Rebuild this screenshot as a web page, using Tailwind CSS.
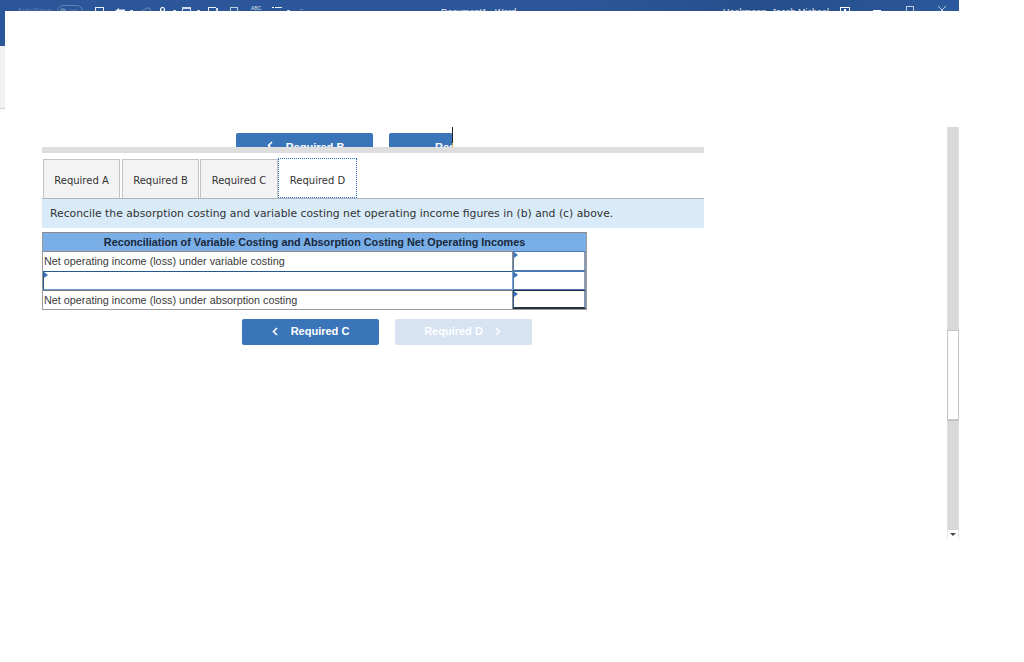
<!DOCTYPE html>
<html>
<head>
<meta charset="utf-8">
<script src="https://cdn.jsdelivr.net/npm/@tailwindcss/browser@4"></script>
<title>Reconciliation</title>
</head>
<body class="bg-white">
<div class="w-[1024px] h-[662px] overflow-hidden bg-white font-['Liberation_Sans',Arial,sans-serif]">
  <div class="w-[959px] h-[11px] overflow-hidden flex items-start bg-gradient-to-r from-[#2b579a] from-60% via-[#254e8b] via-80% to-[#2c599d] text-white">
    <span class="ml-[17px] w-[34px] mt-[6px] text-[8px] leading-[10px] whitespace-nowrap text-white/25 shrink-0">AutoSave</span>
    <span class="ml-[6px] mt-[5px] w-[26px] h-[12px] rounded-full border border-white/25 shrink-0 flex items-center pl-[2px] gap-[3px] text-[6px] leading-[8px] text-white/25"><span class="w-[6px] h-[6px] rounded-full bg-white/25 shrink-0"></span><span>Off</span></span>
    <span class="ml-[12px] mt-[7px] w-[9px] h-[9px] border border-white/90 shrink-0"></span>
    <svg class="ml-[11px] mt-[8px] shrink-0" width="10" height="5" viewBox="0 0 10 5"><path d="M0 3 L4 0 V1.5 H10 V5 H0Z" fill="#f4f7fb"/></svg>
    <span class="ml-[5px] mt-[10px] w-[3px] h-[1px] bg-white/80 shrink-0"></span>
    <svg class="ml-[9px] mt-[7px] shrink-0" width="9" height="5" viewBox="0 0 9 5"><path d="M0 4 L5 1 H8 V5" fill="none" stroke="#fff" stroke-opacity=".3"/></svg>
    <svg class="ml-[9px] mt-[7px] shrink-0" width="5" height="5" viewBox="0 0 5 5"><circle cx="2.5" cy="2.5" r="2" fill="none" stroke="#fff" stroke-width="1.2"/></svg>
    <span class="ml-[8px] mt-[10px] w-[3px] h-[1px] bg-white/80 shrink-0"></span>
    <span class="ml-[6px] mt-[7px] w-[9px] h-[5px] border-t-2 border-x border-white/80 shrink-0"></span>
    <span class="ml-[6px] mt-[10px] w-[3px] h-[1px] bg-white/80 shrink-0"></span>
    <span class="ml-[8px] mt-[7px] w-[8px] h-[5px] border-t border-l border-white/90 shrink-0"></span>
    <span class="mt-[8px] w-[2px] h-[3px] bg-white/80 shrink-0"></span>
    <span class="ml-[12px] mt-[7px] w-[8px] h-[5px] border-t border-x border-white/70 shrink-0"></span>
    <span class="ml-[13px] mt-[5px] w-[9px] text-[5px] leading-[6px] text-white/80 shrink-0">ABC</span>
    <span class="ml-[12px] mt-[7px] w-[2px] h-[1px] bg-white shrink-0"></span>
    <span class="ml-[1px] mt-[7px] w-[7px] h-[1px] bg-white/90 shrink-0"></span>
    <span class="ml-[5px] mt-[10px] w-[3px] h-[1px] bg-white/80 shrink-0"></span>
    <span class="ml-[10px] mt-[9px] w-[3px] h-[1px] bg-white/30 shrink-0"></span>
    <span class="ml-[138px] mt-[7px] w-[76px] text-[9px] leading-[11px] whitespace-nowrap text-white/90 shrink-0">Document1 - Word</span>
    <span class="ml-[206px] mt-[7px] w-[100px] text-[9px] leading-[11px] whitespace-nowrap text-white/90 shrink-0">Hoekmann, Jacob Michael</span>
    <span class="ml-[17px] mt-[7px] w-[10px] h-[9px] border border-white flex justify-center shrink-0"><span class="w-[2px] h-[2px] mt-[1px] bg-white"></span></span>
    <span class="ml-[23px] mt-[10px] w-[8px] h-[1px] bg-white shrink-0"></span>
    <span class="ml-[25px] mt-[6px] w-[8px] h-[8px] border border-white/70 shrink-0"></span>
    <svg class="ml-[24px] mt-[6px] shrink-0" width="8" height="5" viewBox="0 0 8 5"><path d="M0 0 L5 5 M8 0 L3 5" stroke="#fff" stroke-opacity=".7" fill="none"/></svg>
  </div>
  <div class="flex items-start w-[959px]">
    <div class="w-[5px] shrink-0">
      <div class="h-[35px] bg-[#2b579a]"></div>
      <div class="h-[63px] bg-[#f1f1f1] border-b border-[#d4d4d4]"></div>
    </div>
    <div class="flex-1 pl-[37px] pt-[122px]">
      <div class="w-[662px]">
        <div class="relative">
          <div class="flex h-[14px] overflow-hidden pl-[194px] gap-[16px] items-start">
            <div class="w-[137px] h-[29px] bg-[#3a75ba] rounded-t-[2px] text-white text-[11px] font-bold flex justify-center items-center gap-[13px] shrink-0 pl-[2px]"><svg class="-mt-[5px]" width="6" height="9" viewBox="0 0 6 9"><path d="M5 1 L1.5 4.5 L5 8" fill="none" stroke="#fff" stroke-width="1.6"/></svg><span>Required B</span></div>
            <div class="w-[64px] h-[29px] bg-[#3a75ba] rounded-t-[2px] text-white text-[11px] font-bold overflow-hidden pl-[46px] flex items-center shrink-0 border-r border-[#e0a050]"><span>Req</span></div>
          </div>
          <span class="absolute left-[410px] -top-[6px] w-[1px] h-[16px] bg-[#222]"></span>
        </div>
        <div class="h-[6px] bg-[#dedede]"></div>
        <div class="flex h-[46px] pt-[6px] pl-[1px] gap-[2px] items-stretch border-b border-[#aeb4bb] font-['DejaVu_Sans',Verdana,sans-serif] text-[10px] text-[#333]">
          <div class="w-[77px] pt-[2px] bg-[#f3f3f3] border border-b-0 border-[#c4c4c4] flex items-center justify-center">Required A</div>
          <div class="w-[77px] pt-[2px] bg-[#f3f3f3] border border-b-0 border-[#c4c4c4] flex items-center justify-center">Required B</div>
          <div class="w-[78px] pt-[2px] -ml-[1px] bg-[#f3f3f3] border border-b-0 border-[#c4c4c4] flex items-center justify-center">Required C</div>
          <div class="w-[79px] pt-[5px] -ml-[2px] -mt-[1px] bg-white border border-dotted border-[#2a6fc4] flex items-center justify-center">Required D</div>
        </div>
        <div class="h-[29px] pt-[1px] bg-[#d9ebf9] pl-[8px] flex items-center font-['DejaVu_Sans',Verdana,sans-serif] text-[10.8px] text-[#333]">Reconcile the absorption costing and variable costing net operating income figures in (b) and (c) above.</div>
        <div class="mt-[4px] w-[545px] border border-[#9a9a9a] border-t-[#8b8b8b] text-[10.8px] text-[#3a3a3a]">
          <div class="h-[18px] bg-[#7aaee6] flex items-center justify-center font-bold text-[#17283c]">Reconciliation of Variable Costing and Absorption Costing Net Operating Incomes</div>
          <div class="flex h-[20px] border-t border-[#8d8d8d]">
            <div class="w-[470px] pl-[1px] flex items-center border-r border-[#8d8d8d] bg-white">Net operating income (loss) under variable costing</div>
            <div class="relative flex-1 -mt-[1px] border border-[#4a78ae] border-r-2 border-r-[#8d9cb0]"><span class="absolute left-0 top-0 w-0 h-0 border-y-[3px] border-y-transparent border-l-[4px] border-l-[#3a75ba]"></span></div>
          </div>
          <div class="flex h-[19px]">
            <div class="relative w-[470px] border border-[#28578f] border-b-[#6f9fd4] border-r-[#7aa3d0]"><span class="absolute left-0 top-0 w-0 h-0 border-y-[3px] border-y-transparent border-l-[4px] border-l-[#3a75ba]"></span></div>
            <div class="relative flex-1 border border-[#4a78ae] border-r-2 border-r-[#8d9cb0]"><span class="absolute left-0 top-0 w-0 h-0 border-y-[3px] border-y-transparent border-l-[4px] border-l-[#3a75ba]"></span></div>
          </div>
          <div class="flex h-[19px] border-t border-[#6c7580]">
            <div class="w-[470px] pl-[1px] flex items-center border-r border-[#8d8d8d]">Net operating income (loss) under absorption costing</div>
            <div class="relative flex-1 -mt-[1px] border-t border-t-[#1c2a3a] border-b-2 border-b-[#28323c] border-l border-l-[#28578f] border-r-2 border-r-[#7d95b0]"><span class="absolute left-0 top-0 w-0 h-0 border-y-[3px] border-y-transparent border-l-[4px] border-l-[#3a75ba]"></span></div>
          </div>
        </div>
        <div class="mt-[9px] ml-[200px] flex gap-[16px] text-[11px] font-bold">
          <div class="w-[137px] h-[26px] pb-[1px] rounded-[2px] bg-[#3a75ba] text-white flex items-center justify-center gap-[13px]">
            <svg width="6" height="9" viewBox="0 0 6 9"><path d="M5 1 L1.5 4.5 L5 8" fill="none" stroke="#fff" stroke-width="1.6"/></svg>
            <span>Required C</span>
          </div>
          <div class="w-[137px] h-[26px] pb-[1px] rounded-[2px] bg-[#d7e3f1] text-white flex items-center justify-center gap-[12px] pr-[2px]">
            <span>Required D</span>
            <svg width="6" height="9" viewBox="0 0 6 9"><path d="M1 1 L4.5 4.5 L1 8" fill="none" stroke="#fff" stroke-width="1.6"/></svg>
          </div>
        </div>
      </div>
    </div>
    <div class="w-[12px] mt-[116px] shrink-0">
      <div class="h-[203px] bg-[#d9d9d9] border-x border-[#dfdfdf]"></div>
      <div class="h-[91px] bg-white border-x border-t border-b-2 border-[#c4c4c4]"></div>
      <div class="h-[109px] bg-[#d9d9d9] border-x border-[#dfdfdf]"></div>
      <div class="h-[9px] flex justify-center items-center bg-white border-x border-[#e4e4e4]"><span class="w-0 h-0 border-x-[3px] border-x-transparent border-t-[3px] border-t-[#444]"></span></div>
    </div>
  </div>
</div>
</body>
</html>
